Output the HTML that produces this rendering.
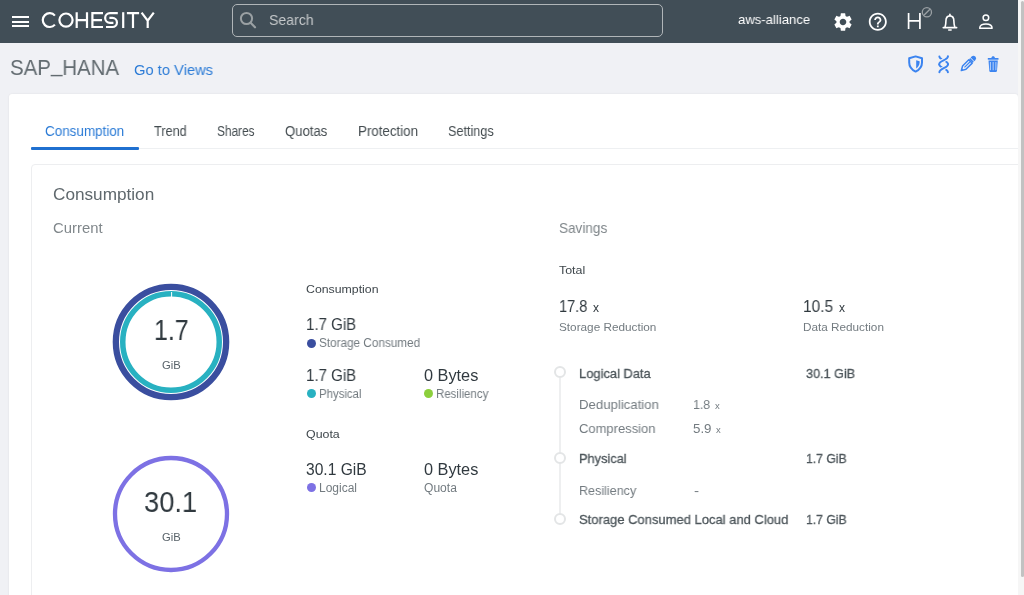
<!DOCTYPE html>
<html><head><meta charset="utf-8"><style>
html,body{margin:0;padding:0;width:1024px;height:595px;overflow:hidden;}
body{font-family:"Liberation Sans", sans-serif;position:relative;}
.t{position:absolute;line-height:1;white-space:nowrap;transform-origin:0 0;will-change:transform;}
</style></head><body>
<div style="position:absolute;left:0px;top:0px;width:1024px;height:595px;background:#f0f1f5"></div>
<div style="position:absolute;left:0px;top:0px;width:1018px;height:43px;background:#414e57"></div>
<div style="position:absolute;left:12.4px;top:16px;width:16.7px;height:2px;background:#fff"></div>
<div style="position:absolute;left:12.4px;top:20.5px;width:16.7px;height:2px;background:#fff"></div>
<div style="position:absolute;left:12.4px;top:25px;width:16.7px;height:2px;background:#fff"></div>
<svg style="position:absolute;left:0;top:0" width="170" height="43" viewBox="0 0 170 43" fill="none" stroke="#fff" stroke-width="2.2"><path d="M54.9,15.6 A6.9,6.9 0 1 0 54.9,24.6"/><circle cx="66" cy="20.1" r="6.6"/><path d="M76.7,12.2V28 M87,12.2V28 M76.7,20.1H87"/><path d="M103,13.2H92.4V27H103 M92.4,20.1H102"/><path d="M117.8,13.2H110A4.85,4.85 0 0 0 110,22.9H113.4 M109.4,17.9H112.4A4.55,4.55 0 0 1 112.4,27H106"/><path d="M123.2,12.2V28"/><path d="M126.9,13.2H139.1 M133,13.2V28"/><path d="M141.6,12.6L147.7,20.6L153.8,12.6 M147.7,20.6V28"/></svg>
<div style="position:absolute;left:232px;top:4px;width:431px;height:32.5px;box-sizing:border-box;border:1.6px solid #b0b5b8;border-radius:5px"></div>
<svg style="position:absolute;left:239px;top:11px" width="18" height="19" viewBox="0 0 18 19"><circle cx="7.5" cy="7.5" r="5.6" fill="none" stroke="#9aa0a3" stroke-width="2"/><line x1="11.6" y1="11.8" x2="16" y2="16.3" stroke="#9aa0a3" stroke-width="2.2" stroke-linecap="round"/></svg>
<div class="t" style="left:268.90px;top:12px;font-size:15px;color:#c5c8ca;transform:scaleX(0.9389);">Search</div>
<div class="t" style="left:738.20px;top:13px;font-size:13.4px;color:#fff;transform:scaleX(0.9790);">aws-alliance</div>
<div class="t" style="left:10.30px;top:57px;font-size:22.5px;color:#626b70;transform:scaleX(0.9092);">SAP<span style="position:relative;top:-3.5px">_</span>HANA</div>
<div class="t" style="left:133.70px;top:63px;font-size:14.8px;color:#2b7bd6;transform:scaleX(0.9937);">Go to Views</div>
<div style="position:absolute;left:9px;top:93.5px;width:1009px;height:520px;background:#fff;border-radius:3px;box-shadow:0 0 2px rgba(0,0,0,0.09)"></div>
<div class="t" style="left:44.80px;top:125px;font-size:13.8px;color:#2b7bd6;transform:scaleX(0.9748);">Consumption</div>
<div class="t" style="left:154.00px;top:125px;font-size:13.8px;color:#444c50;transform:scaleX(0.9211);">Trend</div>
<div class="t" style="left:217.00px;top:125px;font-size:13.8px;color:#444c50;transform:scaleX(0.8571);">Shares</div>
<div class="t" style="left:285.20px;top:125px;font-size:13.8px;color:#444c50;transform:scaleX(0.9506);">Quotas</div>
<div class="t" style="left:358.00px;top:125px;font-size:13.8px;color:#444c50;transform:scaleX(0.9658);">Protection</div>
<div class="t" style="left:448.00px;top:125px;font-size:13.8px;color:#444c50;transform:scaleX(0.9163);">Settings</div>
<div style="position:absolute;left:31px;top:148px;width:987px;height:1px;background:#eef0f2"></div>
<div style="position:absolute;left:31px;top:147px;width:107.5px;height:2.5px;background:#1f70d0;border-radius:1px"></div>
<div style="position:absolute;left:31px;top:163.5px;width:1000px;height:460px;box-sizing:border-box;border:1px solid #edeef0;border-radius:4px;background:#fff"></div>
<div class="t" style="left:53.20px;top:187px;font-size:16.6px;color:#5f686d;transform:scaleX(1.0353);">Consumption</div>
<div class="t" style="left:53.20px;top:221px;font-size:14.2px;color:#80878b;transform:scaleX(1.0470);">Current</div>
<div class="t" style="left:558.90px;top:221px;font-size:14.2px;color:#80878b;transform:scaleX(0.9545);">Savings</div>
<svg style="position:absolute;left:101px;top:272px" width="140" height="140" viewBox="0 0 140 140"><circle cx="70" cy="70" r="55.15" fill="none" stroke="#3a4e9f" stroke-width="6.3"/><circle cx="70" cy="70" r="48.25" fill="none" stroke="#28b1c1" stroke-width="5.5"/><line x1="70.6" y1="20" x2="70.6" y2="25.5" stroke="#fff" stroke-width="1"/></svg>
<div class="t" style="left:153.90px;top:316px;font-size:29px;color:#30393f;transform:scaleX(0.8570);">1.7</div>
<div class="t" style="left:161.60px;top:360px;font-size:11.2px;color:#59636a;transform:scaleX(1.0040);">GiB</div>
<svg style="position:absolute;left:101px;top:444.4px" width="140" height="140" viewBox="0 0 140 140"><circle cx="70" cy="70" r="56" fill="none" stroke="#7d71e4" stroke-width="4.3"/></svg>
<div class="t" style="left:144.40px;top:488px;font-size:29px;color:#30393f;transform:scaleX(0.9416);">30.1</div>
<div class="t" style="left:161.50px;top:532px;font-size:11.2px;color:#59636a;transform:scaleX(1.0040);">GiB</div>
<div class="t" style="left:305.80px;top:283px;font-size:11.6px;color:#3f474c;transform:scaleX(1.0618);">Consumption</div>
<div class="t" style="left:306.20px;top:317px;font-size:15.6px;color:#30393f;transform:scaleX(0.9654);">1.7 GiB</div>
<div style="position:absolute;left:306.5px;top:338.5px;width:9px;height:9px;background:#3a4e9f;border-radius:50%"></div>
<div class="t" style="left:318.90px;top:337px;font-size:12px;color:#737b80;transform:scaleX(0.9780);">Storage Consumed</div>
<div class="t" style="left:306.20px;top:368px;font-size:15.6px;color:#30393f;transform:scaleX(0.9654);">1.7 GiB</div>
<div style="position:absolute;left:306.5px;top:389.3px;width:9px;height:9px;background:#28b1c1;border-radius:50%"></div>
<div class="t" style="left:318.90px;top:388px;font-size:12px;color:#737b80;transform:scaleX(0.9501);">Physical</div>
<div class="t" style="left:423.80px;top:368px;font-size:15.6px;color:#30393f;transform:scaleX(1.0442);">0 Bytes</div>
<div style="position:absolute;left:423.5px;top:389.3px;width:9px;height:9px;background:#8ccf3c;border-radius:50%"></div>
<div class="t" style="left:436.10px;top:388px;font-size:12px;color:#737b80;transform:scaleX(0.9556);">Resiliency</div>
<div class="t" style="left:306.10px;top:428px;font-size:11.6px;color:#3f474c;transform:scaleX(1.0688);">Quota</div>
<div class="t" style="left:306.20px;top:462px;font-size:15.6px;color:#30393f;transform:scaleX(0.9975);">30.1 GiB</div>
<div style="position:absolute;left:306.5px;top:482.8px;width:9px;height:9px;background:#7d71e4;border-radius:50%"></div>
<div class="t" style="left:318.90px;top:482px;font-size:12px;color:#737b80;transform:scaleX(0.9947);">Logical</div>
<div class="t" style="left:423.80px;top:462px;font-size:15.6px;color:#30393f;transform:scaleX(1.0442);">0 Bytes</div>
<div class="t" style="left:423.80px;top:482px;font-size:12px;color:#737b80;transform:scaleX(1.0046);">Quota</div>
<div class="t" style="left:558.90px;top:264px;font-size:11.6px;color:#3f474c;transform:scaleX(1.0694);">Total</div>
<div class="t" style="left:558.90px;top:299px;font-size:15.8px;color:#30393f;transform:scaleX(0.9203);">17.8</div>
<div class="t" style="left:593.40px;top:302px;font-size:12px;color:#30393f;transform:scaleX(1.0000);">x</div>
<div class="t" style="left:558.90px;top:321px;font-size:11.6px;color:#737b80;transform:scaleX(1.0143);">Storage Reduction</div>
<div class="t" style="left:803.20px;top:299px;font-size:15.8px;color:#30393f;transform:scaleX(0.9789);">10.5</div>
<div class="t" style="left:839.30px;top:302px;font-size:12px;color:#30393f;transform:scaleX(1.0000);">x</div>
<div class="t" style="left:803.40px;top:321px;font-size:11.6px;color:#737b80;transform:scaleX(1.0125);">Data Reduction</div>
<div style="position:absolute;left:558.6px;top:378px;width:2px;height:140px;background:#eeeff0"></div>
<div style="position:absolute;left:553.6px;top:366.2px;width:12px;height:12px;box-sizing:border-box;border:2px solid #e3e5e6;border-radius:50%;background:#fff"></div>
<div style="position:absolute;left:553.6px;top:451.5px;width:12px;height:12px;box-sizing:border-box;border:2px solid #e3e5e6;border-radius:50%;background:#fff"></div>
<div style="position:absolute;left:553.6px;top:512.5px;width:12px;height:12px;box-sizing:border-box;border:2px solid #e3e5e6;border-radius:50%;background:#fff"></div>
<div class="t" style="left:579.20px;top:367px;font-size:13.3px;color:#4d565b;transform:scaleX(0.9706);-webkit-text-stroke:0.3px #4d565b;">Logical Data</div>
<div class="t" style="left:806.30px;top:367px;font-size:13.3px;color:#4d565b;transform:scaleX(0.9507);-webkit-text-stroke:0.3px #4d565b;">30.1 GiB</div>
<div class="t" style="left:579.20px;top:398px;font-size:13.3px;color:#737b80;transform:scaleX(0.9910);">Deduplication</div>
<div class="t" style="left:693.20px;top:398px;font-size:13.3px;color:#737b80;transform:scaleX(0.9297);">1.8</div>
<div class="t" style="left:715.40px;top:401px;font-size:9.5px;color:#737b80;transform:scaleX(1.0000);">x</div>
<div class="t" style="left:579.20px;top:422px;font-size:13.3px;color:#737b80;transform:scaleX(0.9761);">Compression</div>
<div class="t" style="left:693.00px;top:422px;font-size:13.3px;color:#737b80;transform:scaleX(0.9892);">5.9</div>
<div class="t" style="left:715.70px;top:425px;font-size:9.5px;color:#737b80;transform:scaleX(1.0000);">x</div>
<div class="t" style="left:579.00px;top:452px;font-size:13.3px;color:#4d565b;transform:scaleX(0.9616);-webkit-text-stroke:0.3px #4d565b;">Physical</div>
<div class="t" style="left:806.30px;top:452px;font-size:13.3px;color:#4d565b;transform:scaleX(0.9172);-webkit-text-stroke:0.3px #4d565b;">1.7 GiB</div>
<div class="t" style="left:579.00px;top:484px;font-size:13.3px;color:#737b80;transform:scaleX(0.9435);">Resiliency</div>
<div class="t" style="left:694.40px;top:484px;font-size:13.3px;color:#737b80;transform:scaleX(1.1429);">-</div>
<div class="t" style="left:579.00px;top:513px;font-size:13.3px;color:#4d565b;transform:scaleX(0.9768);-webkit-text-stroke:0.3px #4d565b;">Storage Consumed Local and Cloud</div>
<div class="t" style="left:806.30px;top:513px;font-size:13.3px;color:#4d565b;transform:scaleX(0.9172);-webkit-text-stroke:0.3px #4d565b;">1.7 GiB</div>
<svg style="position:absolute;left:831.9px;top:10.6px" width="22" height="22" viewBox="0 0 24 24"><path fill="#fff" d="M19.14 12.94c.04-.3.06-.61.06-.94 0-.32-.02-.64-.07-.94l2.03-1.58c.18-.14.23-.41.12-.61l-1.92-3.32c-.12-.22-.37-.29-.59-.22l-2.39.96c-.5-.38-1.030-.7-1.62-.94l-.36-2.54c-.04-.24-.24-.41-.48-.41h-3.84c-.24 0-.43.17-.47.41l-.36 2.54c-.59.24-1.13.57-1.62.94l-2.39-.96c-.22-.08-.47 0-.59.22L2.74 8.87c-.12.21-.08.47.12.61l2.03 1.58c-.05.3-.09.63-.09.94s.02.64.07.94l-2.03 1.58c-.18.14-.23.41-.12.61l1.92 3.32c.12.22.37.29.59.22l2.39-.96c.5.38 1.03.7 1.62.94l.36 2.54c.05.24.24.41.48.41h3.84c.24 0 .44-.17.47-.41l.36-2.54c.59-.24 1.13-.56 1.62-.94l2.39.96c.22.08.47 0 .59-.22l1.920-3.32c.12-.22.07-.47-.12-.61l-2.01-1.58zM12 15.6c-1.98 0-3.6-1.62-3.6-3.6s1.62-3.6 3.6-3.6 3.6 1.62 3.6 3.6-1.62 3.6-3.6 3.6z"/></svg>
<svg style="position:absolute;left:867.3px;top:10.7px" width="21.6" height="21.6" viewBox="0 0 24 24"><path fill="#fff" d="M11 18h2v-2h-2v2zm1-16C6.48 2 2 6.48 2 12s4.48 10 10 10 10-4.48 10-10S17.52 2 12 2zm0 18c-4.410 0-8-3.59-8-8s3.59-8 8-8 8 3.59 8 8-3.59 8-8 8zm0-14c-2.21 0-4 1.79-4 4h2c0-1.1.9-2 2-2s2 .9 2 2c0 2-3 1.75-3 5h2c0-2.25 3-2.5 3-5 0-2.21-1.79-4-4-4z"/></svg>
<svg style="position:absolute;left:900px;top:0" width="40" height="36" viewBox="0 0 40 36" fill="none"><path d="M8.6,13V28.9 M19.9,13V28.9 M8.6,20.9H19.9" stroke="#fff" stroke-width="1.7"/><circle cx="26.9" cy="12.2" r="4.6" stroke="#9ba1a5" stroke-width="1.3"/><path d="M29.9,9.2L23.9,15.2" stroke="#9ba1a5" stroke-width="1.3"/></svg>
<svg style="position:absolute;left:940px;top:10px" width="20" height="22" viewBox="0 0 20 22" fill="none" stroke="#fff"><path d="M5,17.2C5.5,15.6 5.9,13.8 5.9,11.2C5.9,8 7.6,5.9 9.9,5.9C12.2,5.9 13.9,8 13.9,11.2C13.9,13.8 14.3,15.6 14.8,17.2" stroke-width="1.6"/><path d="M3.3,17.6H16.6" stroke-width="1.7" stroke-linecap="round"/><path d="M9.9,4.2V5.6" stroke-width="1.6" stroke-linecap="round"/><path d="M8.7,19.9H11.1" stroke-width="1.5" stroke-linecap="round"/></svg>
<svg style="position:absolute;left:976px;top:10px" width="20" height="22" viewBox="0 0 20 22" fill="none" stroke="#fff" stroke-width="1.5"><circle cx="9.9" cy="7.7" r="2.8"/><path d="M3.7,18.2C3.7,15.3 6.5,13.9 9.9,13.9C13.3,13.9 16.1,15.3 16.1,18.2Z" stroke-linejoin="round"/></svg>
<svg style="position:absolute;left:904px;top:52px" width="24" height="24" viewBox="0 0 24 24" fill="none"><path d="M5.2,6.3L11.6,4.4L18,6.3V10.4C18,14.2 15.4,17.6 11.6,19.6C7.8,17.6 5.2,14.2 5.2,10.4Z" stroke="#3b84f0" stroke-width="2" stroke-linejoin="round"/><path d="M12.2,8.2L15.6,9.2V10.6C15.5,13 14.3,15 12.2,16.4Z" fill="#3b84f0"/></svg>
<svg style="position:absolute;left:936px;top:54px" width="16" height="21" viewBox="0 0 16 21" fill="none" stroke-linecap="round"><path d="M11.9,2.5C11.7,6.2 3.2,6.5 3.2,10.2C3.2,14 11.9,14.4 11.9,18.2" stroke="#3b84f0" stroke-width="2"/><path d="M12,10.2C12,14 3.4,14.4 3.4,18.2" stroke="#f0f1f5" stroke-width="4" stroke-linecap="butt"/><path d="M12,10.2C12,14 3.4,14.4 3.4,18.2" stroke="#3b84f0" stroke-width="2"/><path d="M3.4,2.5C3.6,6.2 12,6.5 12,10.2" stroke="#3b84f0" stroke-width="2"/><path d="M11.9,2.5C11.7,6.2 3.2,6.5 3.2,10.2" stroke="#f0f1f5" stroke-width="4" stroke-linecap="butt"/><path d="M11.9,2.5C11.7,6.2 3.2,6.5 3.2,10.2" stroke="#3b84f0" stroke-width="2"/></svg>
<svg style="position:absolute;left:955px;top:52px" width="24" height="24" viewBox="0 0 24 24"><g transform="translate(6.3,18.6) rotate(-45)"><path d="M0,0L4.2,-2.4H13V2.4H4.2Z" fill="none" stroke="#3b84f0" stroke-width="1.5" stroke-linejoin="round"/><path d="M0,0L2,-1.1V1.1Z" fill="#3b84f0"/><path d="M4.5,0H12.5" stroke="#3b84f0" stroke-width="1.1"/><rect x="13.6" y="-2.6" width="1.6" height="5.2" fill="#3b84f0"/><path d="M15.8,-2.6H17.2A2.6,2.6 0 0 1 17.2,2.6H15.8Z" fill="#3b84f0"/></g></svg>
<svg style="position:absolute;left:985px;top:52px" width="16" height="24" viewBox="0 0 16 24"><path d="M6.4,6.1C6.4,3.6 9.9,3.6 9.9,6.1Z" fill="#3b84f0"/><path d="M2.8,6H13.5V7.7H2.8Z" fill="#3b84f0"/><path d="M3.5,8.4H12.8L12,18.8C11.9,19.6 11.3,20 10.5,20H5.8C5,20 4.4,19.6 4.3,18.8Z" fill="#3b84f0"/><path d="M5.4,10V18.2 M8.15,10V18.2 M10.9,10V18.2" stroke="#f5f7fb" stroke-width="0.9" opacity="0.75"/></svg>
<div style="position:absolute;left:1018px;top:0px;width:6px;height:595px;background:#f6f6f6"></div>
<div style="position:absolute;left:1021px;top:1px;width:3px;height:576px;background:#c2c2c2;border-radius:2px"></div>
</body></html>
